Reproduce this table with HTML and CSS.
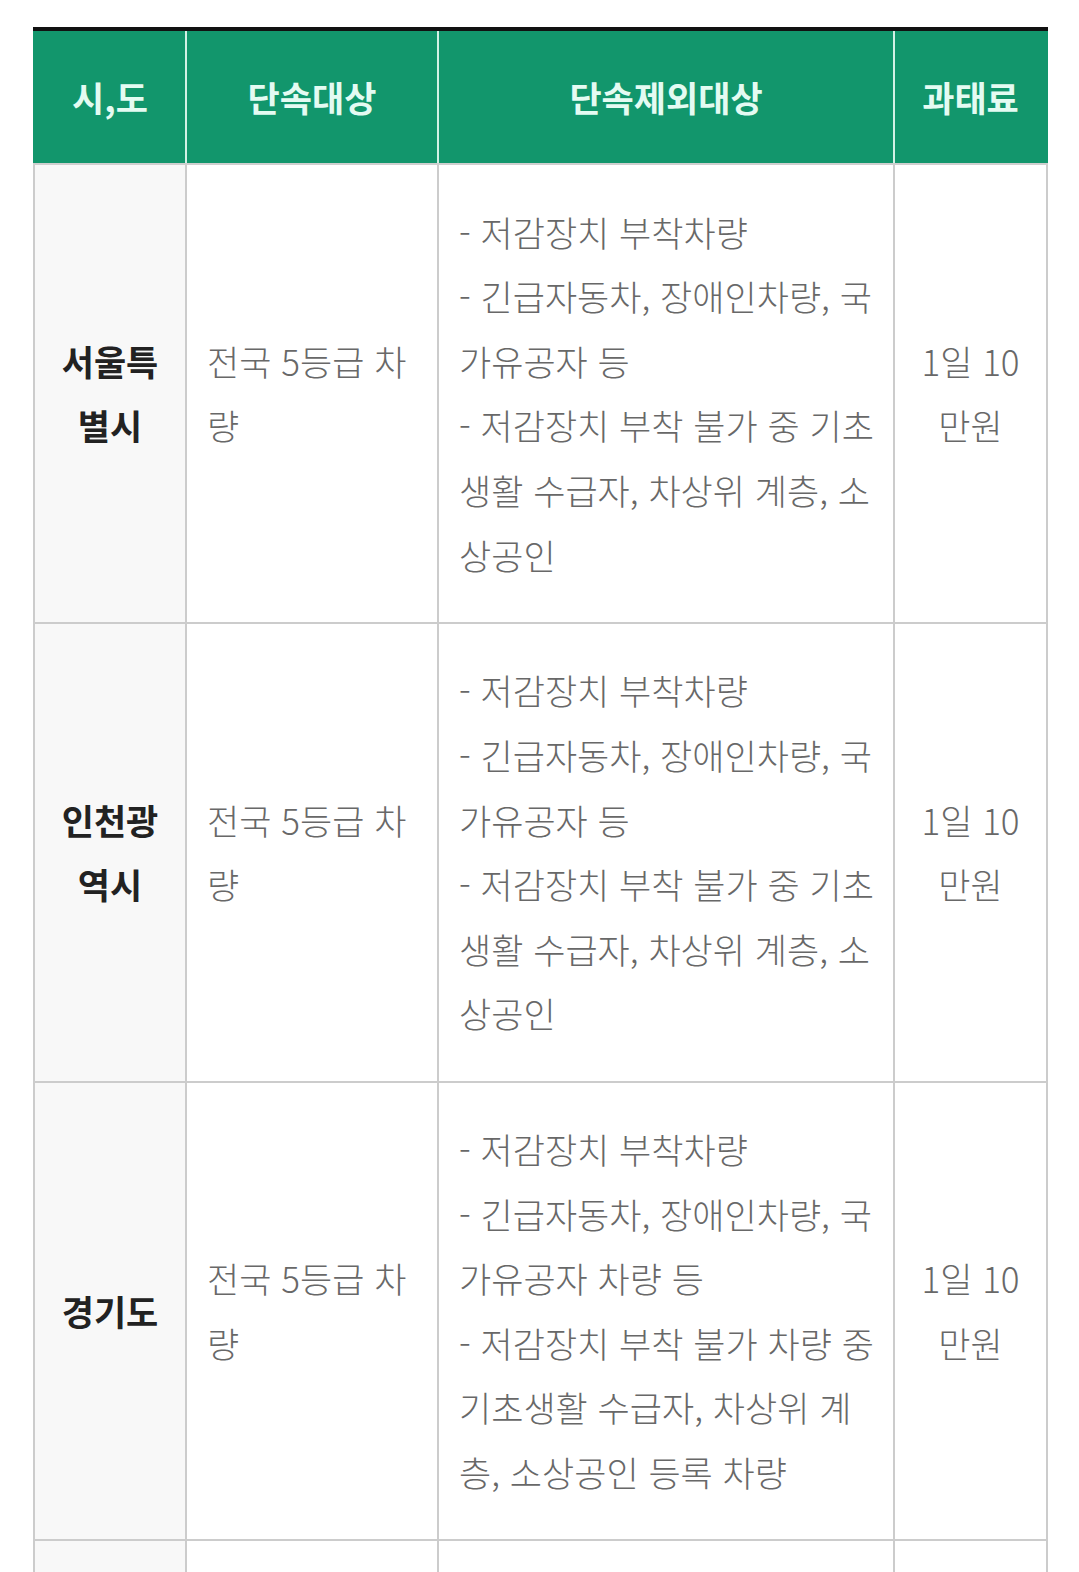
FILE: index.html
```html
<!DOCTYPE html>
<html lang="ko">
<head>
<meta charset="utf-8">
<link rel="stylesheet" href="styles.css">
</head>
<body>
<div class="wrap">
<table class="tbl">
<thead>
<tr>
<th class="c1">시,도</th>
<th class="c2">단속대상</th>
<th class="c3">단속제외대상</th>
<th class="c4">과태료</th>
</tr>
</thead>
<tbody>
<tr>
<td class="region">서울특별시</td>
<td class="target">전국 5등급 차량</td>
<td class="except">- 저감장치 부착차량<br>- 긴급자동차, 장애인차량, 국가유공자 등<br>- 저감장치 부착 불가 중 기초생활 수급자, 차상위 계층, 소상공인</td>
<td class="fine">1일 10<br>만원</td>
</tr>
<tr>
<td class="region">인천광역시</td>
<td class="target">전국 5등급 차량</td>
<td class="except">- 저감장치 부착차량<br>- 긴급자동차, 장애인차량, 국가유공자 등<br>- 저감장치 부착 불가 중 기초생활 수급자, 차상위 계층, 소상공인</td>
<td class="fine">1일 10<br>만원</td>
</tr>
<tr>
<td class="region">경기도</td>
<td class="target">전국 5등급 차량</td>
<td class="except">- 저감장치 부착차량<br>- 긴급자동차, 장애인차량, 국가유공자 차량 등<br>- 저감장치 부착 불가 차량 중 기초생활 수급자, 차상위 계층, 소상공인 등록 차량</td>
<td class="fine">1일 10<br>만원</td>
</tr>
<tr>
<td class="region">부산광역시</td>
<td class="target">전국 5등급 차량</td>
<td class="except">- 저감장치 부착차량<br>- 긴급자동차, 장애인차량, 국가유공자 등</td>
<td class="fine">1일 10<br>만원</td>
</tr>
</tbody>
</table>
</div>
</body>
</html>
```

FILE: styles.css
```css
html, body {
  margin: 0;
  padding: 0;
  background: #ffffff;
}

.wrap {
  padding: 27px 0 0 33px;
}

.tbl {
  width: 1015px;
  border-collapse: collapse;
  table-layout: fixed;
  font-family: "Noto Sans CJK KR", "Noto Sans", sans-serif;
  border-top: 4px solid #111111;
}

.tbl th {
  background: #12966c;
  color: #e4fbf2;
  font-size: 35px;
  font-weight: 700;
  line-height: 52px;
  padding: 40px 10px;
  text-align: center;
  border-left: 2px solid #d2f1e5;
  border-right: 2px solid #d2f1e5;
  border-bottom: 2px solid #cfcfcf;
}

.tbl th.c1 { width: 130px; border-left-color: #12966c; }
.tbl th.c2 { width: 230px; }
.tbl th.c3 { width: 434px; }
.tbl th.c4 { border-right-color: #12966c; }

.tbl td {
  border: 2px solid #cccccc;
  padding: 34.6px 20px;
  font-family: "Noto Sans CJK KR Light", "Noto Sans CJK KR DemiLight", "Noto Sans CJK KR", sans-serif;
  font-size: 35px;
  line-height: 64.6px;
  font-weight: 300;
  color: #686868;
  vertical-align: middle;
  background: #ffffff;
}

.tbl td.region {
  background: #f8f8f8;
  color: #222222;
  font-family: "Noto Sans CJK KR", "Noto Sans", sans-serif;
  font-weight: 700;
  text-align: center;
}

.tbl td.target {
  text-align: left;
}

.tbl td.except {
  text-align: left;
  padding-right: 14px;
}

.tbl td.fine {
  text-align: center;
}
```
